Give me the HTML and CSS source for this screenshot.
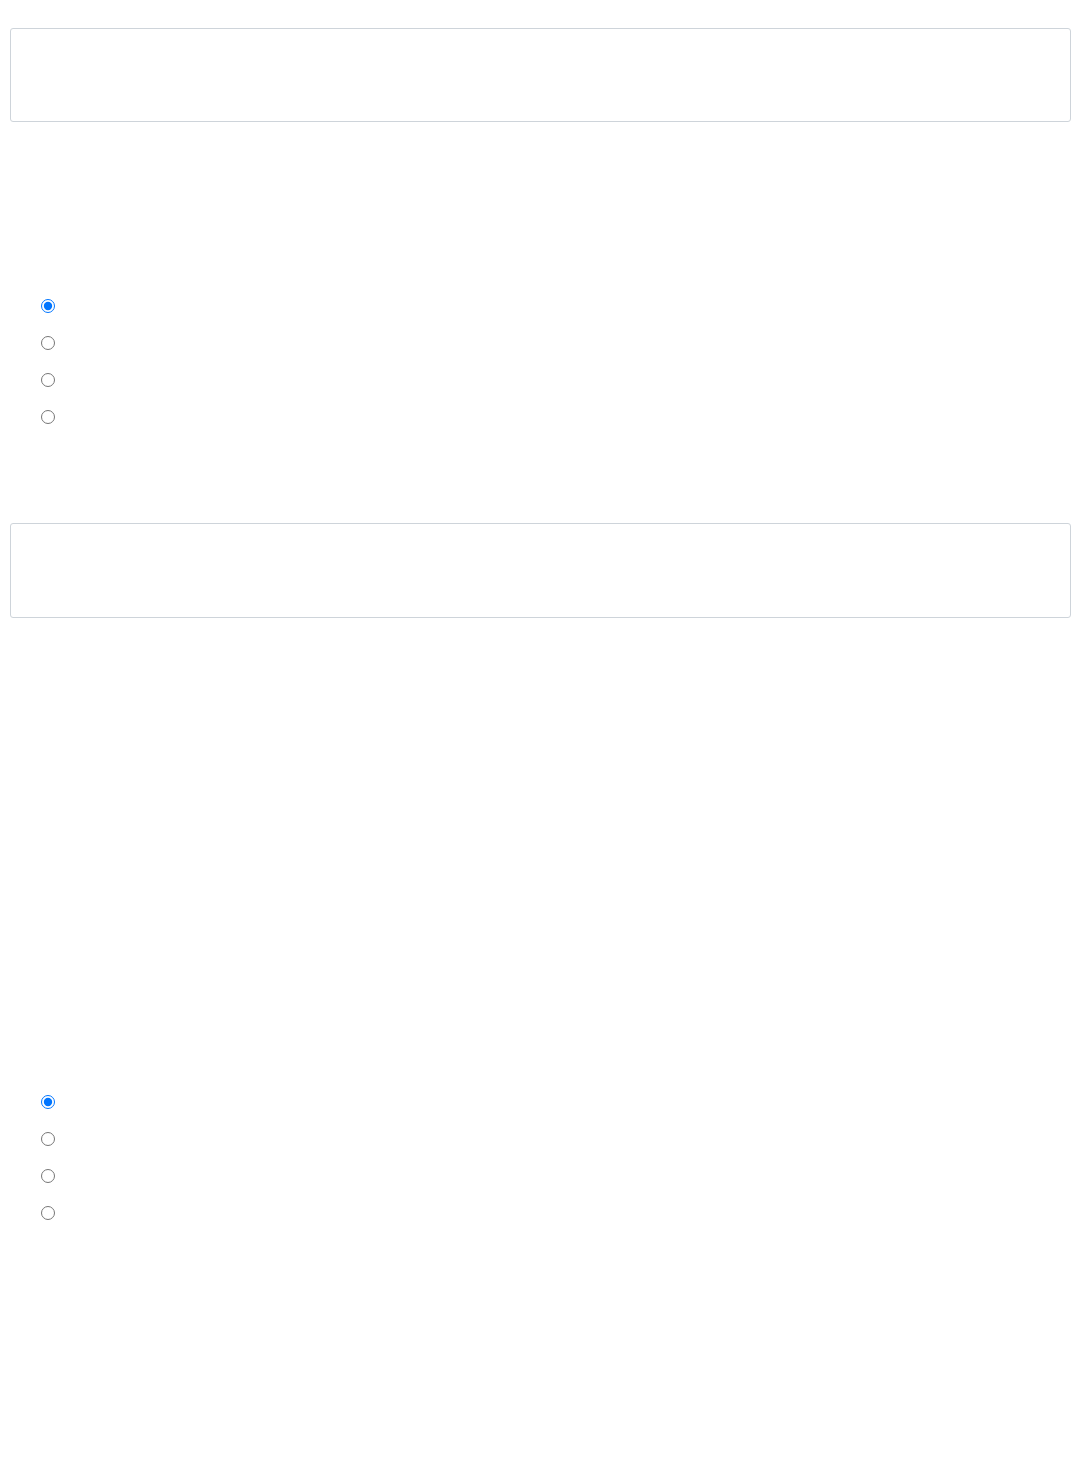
FILE: index.html
```html
<!DOCTYPE html>
<html lang="en">
<head>
  <meta charset="UTF-8">
  <title>Choices</title>
  <link rel="stylesheet" href="styles.css">
</head>
<body>

  <section class="block first">
    <div class="field-box"></div>

    <div class="options">
      <label class="option"><input type="radio" name="groupA" checked></label>
      <label class="option"><input type="radio" name="groupA"></label>
      <label class="option"><input type="radio" name="groupA"></label>
      <label class="option"><input type="radio" name="groupA"></label>
    </div>
  </section>

  <section class="block second">
    <div class="field-box"></div>

    <div class="options">
      <label class="option"><input type="radio" name="groupB" checked></label>
      <label class="option"><input type="radio" name="groupB"></label>
      <label class="option"><input type="radio" name="groupB"></label>
      <label class="option"><input type="radio" name="groupB"></label>
    </div>
  </section>

</body>
</html>
```

FILE: styles.css
```css
body {
  margin: 0;
  padding: 0 8px 0 10px;
  background: #fff;
  font-family: "Liberation Sans", Arial, sans-serif;
}

.block.first {
  padding-top: 28px;
}

.block.second {
  padding-top: 87px;
}

.field-box {
  height: 94px;
  box-sizing: border-box;
  border: 1px solid #ced4da;
  border-radius: 3px;
  background: #fff;
}

.second .field-box {
  height: 95px;
}

.options {
  display: flex;
  flex-direction: column;
  padding-left: 26px;
}

.first .options {
  margin-top: 166px;
}

.second .options {
  margin-top: 466px;
}

.option {
  display: flex;
  align-items: flex-start;
  box-sizing: border-box;
  height: 37px;
  padding-top: 11px;
}

.option input {
  margin: 0 0 0 5px;
  width: 14px;
  height: 14px;
}
```
